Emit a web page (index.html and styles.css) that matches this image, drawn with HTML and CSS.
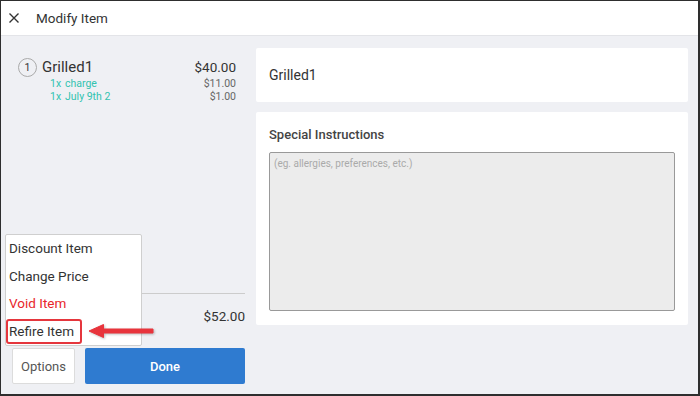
FILE: index.html
```html
<!DOCTYPE html>
<html lang="en">
<head>
    <meta charset="UTF-8">
    <title>Modify Item</title>
    <link rel="stylesheet" href="styles.css">
</head>
<body>
<div class="frame">
    <div class="header">
        <svg class="close" width="10" height="10" viewBox="0 0 10 10">
            <path d="M0.5 0.5L9.5 9.5M9.5 0.5L0.5 9.5" stroke="#333" stroke-width="1.4" fill="none"/>
        </svg>
        <span class="title">Modify Item</span>
    </div>
    <div class="main">
        <div class="left">
            <div class="item">
                <div class="item-row">
                    <span class="qty">1</span>
                    <span class="name">Grilled1</span>
                    <span class="price">$40.00</span>
                </div>
                <div class="mod-row">
                    <span class="mod-qty">1x</span>
                    <span class="mod-name">charge</span>
                    <span class="mod-price">$11.00</span>
                </div>
                <div class="mod-row">
                    <span class="mod-qty">1x</span>
                    <span class="mod-name">July 9th 2</span>
                    <span class="mod-price">$1.00</span>
                </div>
            </div>
            <div class="total">
                <span>$52.00</span>
            </div>
            <div class="buttons">
                <button class="btn-options">Options</button>
                <button class="btn-done">Done</button>
            </div>
        </div>
        <div class="right">
            <div class="card card-name">Grilled1</div>
            <div class="card card-notes">
                <div class="label">Special Instructions</div>
                <div class="notes">(eg. allergies, preferences, etc.)</div>
            </div>
        </div>
    </div>

    <ul class="menu">
        <li>Discount Item</li>
        <li>Change Price</li>
        <li class="void">Void Item</li>
        <li>Refire Item</li>
    </ul>
    <div class="highlight"></div>
    <svg class="arrow" width="72" height="20" viewBox="0 0 72 20">
        <path d="M4 10L18.5 3.5V8H68V12H18.5V16.5Z" fill="#e8343c" stroke="#e8343c" stroke-width="1" stroke-linejoin="round"/>
    </svg>
</div>
</body>
</html>
```

FILE: styles.css
```css
* {
    margin: 0;
    padding: 0;
    box-sizing: border-box;
}

body {
    font-family: Roboto, "Liberation Sans", sans-serif;
    color: #333;
}

.frame {
    width: 700px;
    height: 396px;
    border-style: solid;
    border-color: #2e2e2e;
    border-width: 1px 2px 2px 1px;
    background-color: #eff0f4;
    position: relative;
    display: flex;
    flex-direction: column;
}

.header {
    height: 35px;
    background-color: #fff;
    border-bottom: 1px solid #e3e4e8;
    display: flex;
    align-items: center;
    padding-left: 8px;
}

.close {
    margin-right: 17px;
}

.title {
    font-size: 13.5px;
    color: #333;
}

.main {
    flex: 1;
    display: flex;
    gap: 11px;
    padding: 0 10px 0 11px;
}

.left {
    width: 233px;
    display: flex;
    flex-direction: column;
    padding: 21px 0 10px;
}

.item {
    flex: 1;
    padding: 0 9px 0 6px;
}

.item-row {
    display: flex;
    align-items: center;
    height: 20px;
}

.qty {
    width: 19px;
    height: 19px;
    border: 1px solid #aaa;
    border-radius: 50%;
    font-size: 10.5px;
    line-height: 17px;
    text-align: center;
    margin-right: 5px;
}

.name {
    font-size: 15px;
    flex: 1;
}

.price {
    font-size: 13.5px;
}

.mod-row {
    display: flex;
    font-size: 10.5px;
    line-height: 13px;
    padding-left: 32px;
}

.mod-qty,
.mod-name {
    color: #32c3b0;
}

.mod-qty {
    width: 15px;
}

.mod-name {
    flex: 1;
}

.mod-price {
    color: #666;
}

.total {
    height: 45px;
    border-top: 1px solid #ccc;
    display: flex;
    justify-content: flex-end;
    align-items: center;
    font-size: 13.5px;
}

.buttons {
    display: flex;
    gap: 10px;
    margin-top: 10px;
    height: 36px;
}

.buttons button {
    font-family: Roboto, "Liberation Sans", sans-serif;
    font-size: 13px;
    border-radius: 2px;
}

.btn-options {
    width: 63px;
    background-color: #fff;
    border: 1px solid #dcdcdc;
    color: #555;
}

.btn-done {
    flex: 1;
    background-color: #2f7bd0;
    border: none;
    color: #fff;
    font-size: 14px;
    font-weight: 500;
}

.right {
    flex: 1;
    display: flex;
    flex-direction: column;
    gap: 10px;
    padding-top: 12px;
}

.card {
    background-color: #fff;
    border-radius: 2px;
}

.card-name {
    height: 54px;
    font-size: 14px;
    line-height: 54px;
    padding-left: 13px;
}

.card-notes {
    height: 213px;
    padding: 15px 13px 14px;
}

.label {
    font-size: 13px;
    font-weight: 500;
    color: #444;
    margin-bottom: 10px;
}

.notes {
    height: 159px;
    background-color: #ececec;
    border: 1px solid #999;
    border-radius: 2px;
    font-size: 10px;
    color: #aaa;
    padding: 5px 4px;
}

.menu {
    list-style: none;
    position: absolute;
    left: 4px;
    top: 233px;
    width: 137px;
    background-color: #fff;
    border: 1px solid #cfcfcf;
    border-radius: 2px;
}

.menu li {
    height: 27.5px;
    line-height: 27.5px;
    font-size: 13.5px;
    color: #333;
    padding-left: 3px;
}

.menu li.void {
    color: #e8262b;
}

.highlight {
    position: absolute;
    left: 5px;
    top: 318px;
    width: 76px;
    height: 25px;
    border: 2px solid #e5363d;
    border-radius: 3px;
}

.arrow {
    position: absolute;
    left: 84px;
    top: 320px;
    filter: drop-shadow(1px 1px 1px rgba(0, 0, 0, 0.25));
}
```
